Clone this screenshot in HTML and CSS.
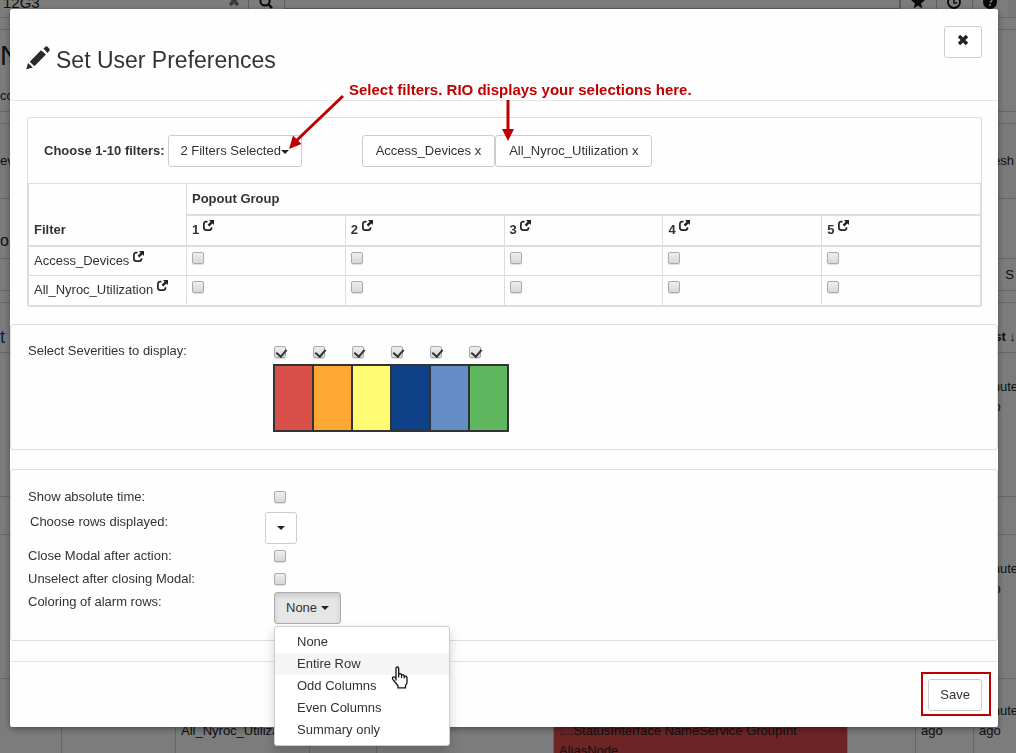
FILE: index.html
```html
<!DOCTYPE html>
<html lang="en">
<head>
<meta charset="utf-8">
<title>Set User Preferences</title>
<link rel="stylesheet" href="styles.css">
</head>
<body>
<svg class="defs" aria-hidden="true">
  <symbol id="i-share" viewBox="0 0 11 11"><path d="M4.500 1.700H3.200Q.9 1.700.9 4V7.800Q.9 10.100 3.200 10.100H6.200Q8.500 10.100 8.500 7.800V7.200" fill="none" stroke="#222" stroke-width="1.700"/><path d="M6 0h5v5L9.400 3.600 6.400 6.600 4.600 4.800 7.600 1.700z" fill="#222"/></symbol>
  <symbol id="i-x" viewBox="0 0 12 12"><path d="M3.200.8 6 3.600 8.800.8 11.200 3.200 8.400 6 11.200 8.800 8.800 11.200 6 8.400 3.200 11.200.8 8.800 3.600 6 .8 3.200z" fill="currentColor"/></symbol>
</svg>

<main class="page" aria-hidden="true">
  <div class="topbar">
    <span class="tb-query">12G3</span>
    <svg class="tb-clear" width="12" height="12"><use href="#i-x"/></svg>
    <span class="tb-cell"><svg width="14" height="14" viewBox="0 0 14 14"><circle cx="6" cy="6" r="4.600" fill="none" stroke="#111" stroke-width="2"/><path d="M9 9l4 4" stroke="#111" stroke-width="2.400"/></svg></span>
    <span class="tb-fill"></span>
    <span class="tb-cell"><svg width="14" height="14" viewBox="0 0 14 14"><path d="M7 0l2 5h5l-4 3.400 1.500 5.100L7 10.500l-4.500 3L4 8.400 0 5h5z" fill="#111"/></svg></span>
    <span class="tb-cell"><svg width="14" height="14" viewBox="0 0 14 14"><circle cx="7" cy="7" r="6" fill="none" stroke="#111" stroke-width="1.800"/><path d="M7 3v5h3" fill="none" stroke="#111" stroke-width="1.400"/></svg></span>
    <span class="tb-cell"><svg width="14" height="14" viewBox="0 0 14 14"><circle cx="7" cy="7" r="7" fill="#111"/><path d="M5 5q0-2 2-2t2 2q0 1-2 2.500M7 9v2" fill="none" stroke="#fff" stroke-width="1.600"/></svg></span>
  </div>
  <div class="band band-gap"></div>
  <div class="band band-title"><span class="big">N</span><span class="small">cc</span></div>
  <div class="band band-gap"></div>
  <div class="band band-tools"><span>ev</span><span class="right">Refresh</span></div>
  <div class="band band-info"><span class="mid">o</span></div>
  <div class="band band-search"><span></span><span class="right">S</span></div>
  <div class="band band-gap"></div>
  <div class="row row-head"><span class="sort">t</span><span></span><span></span><span></span><span></span><span></span><span></span><span></span><span class="blue">Last ↓</span></div>
  <div class="row row-tall"><span></span><span></span><span></span><span></span><span></span><span></span><span></span><span></span><span>minutes ago</span></div>
  <div class="row row-slim"><span></span><span></span><span></span><span></span><span></span><span></span><span></span><span></span><span></span></div>
  <div class="row row-tall"><span></span><span></span><span></span><span></span><span></span><span></span><span></span><span></span><span>minutes ago</span></div>
  <div class="row row-last"><span></span><span></span><span><br>All_Nyroc_Utilization</span><span></span><span></span><span class="alarm"><br>....StatusInterface NameService GroupInt AliasNode</span><span></span><span>minutes ago</span><span>minutes ago</span></div>
</main>

<div class="backdrop">
  <section class="modal" role="dialog" aria-labelledby="title">
    <header class="modal-head">
      <svg class="pencil" width="24" height="24" viewBox="0 0 24 24"><path d="M.3 23.300 2 17 6.900 21.500zM3.700 15.800 15 4.200 19.900 8.600 8.400 20.200zM17.400 2.400 19.800.4Q20.600-.1 21.300.6L23.500 2.900Q24.100 3.700 23.500 4.400L21.600 6.900z" fill="#2b2b2b"/></svg>
      <h1 id="title">Set User Preferences</h1>
      <button class="btn close" aria-label="Close"><svg width="12" height="12"><use href="#i-x"/></svg></button>
    </header>

    <div class="panel filters">
      <div class="choose">
        <strong>Choose 1-10 filters:</strong>
        <button class="btn chosen">2 Filters Selected<i class="caret"></i></button>
        <div class="tags"><button class="btn">Access_Devices x</button><button class="btn">All_Nyroc_Utilization x</button></div>
      </div>
      <table class="groups">
        <thead>
          <tr><th class="name" rowspan="2">Filter</th><th class="double" colspan="5">Popout Group</th></tr>
          <tr><th>1 <svg class="share"><use href="#i-share"/></svg></th><th>2 <svg class="share"><use href="#i-share"/></svg></th><th>3 <svg class="share"><use href="#i-share"/></svg></th><th>4 <svg class="share"><use href="#i-share"/></svg></th><th>5 <svg class="share"><use href="#i-share"/></svg></th></tr>
        </thead>
        <tbody>
          <tr><td>Access_Devices <svg class="share"><use href="#i-share"/></svg></td><td><input type="checkbox" aria-label="Access_Devices group 1"></td><td><input type="checkbox" aria-label="Access_Devices group 2"></td><td><input type="checkbox" aria-label="Access_Devices group 3"></td><td><input type="checkbox" aria-label="Access_Devices group 4"></td><td><input type="checkbox" aria-label="Access_Devices group 5"></td></tr>
          <tr><td>All_Nyroc_Utilization <svg class="share"><use href="#i-share"/></svg></td><td><input type="checkbox" aria-label="All_Nyroc_Utilization group 1"></td><td><input type="checkbox" aria-label="All_Nyroc_Utilization group 2"></td><td><input type="checkbox" aria-label="All_Nyroc_Utilization group 3"></td><td><input type="checkbox" aria-label="All_Nyroc_Utilization group 4"></td><td><input type="checkbox" aria-label="All_Nyroc_Utilization group 5"></td></tr>
        </tbody>
      </table>
    </div>

    <div class="panel severities">
      <span class="label">Select Severities to display:</span>
      <div>
        <div class="checks"><input type="checkbox" checked aria-label="Critical"><input type="checkbox" checked aria-label="Major"><input type="checkbox" checked aria-label="Minor"><input type="checkbox" checked aria-label="Warning"><input type="checkbox" checked aria-label="Info"><input type="checkbox" checked aria-label="Clear"></div>
        <div class="swatches"><i class="red"></i><i class="orange"></i><i class="yellow"></i><i class="navy"></i><i class="sky"></i><i class="green"></i></div>
      </div>
    </div>

    <div class="panel settings">
      <div class="setting"><label class="label" for="abs">Show absolute time:</label><input type="checkbox" id="abs"></div>
      <div class="setting rows"><label class="label" for="rows">Choose rows displayed:</label><button class="btn square" id="rows"><i class="caret"></i></button></div>
      <div class="setting"><label class="label" for="cls">Close Modal after action:</label><input type="checkbox" id="cls"></div>
      <div class="setting"><label class="label" for="uns">Unselect after closing Modal:</label><input type="checkbox" id="uns"></div>
      <div class="setting coloring"><label class="label" for="col">Coloring of alarm rows:</label>
        <div class="dropdown">
          <button class="btn open" id="col">None <i class="caret"></i></button>
          <div class="menu">
            <a href="#none">None</a><a href="#entire" class="active">Entire Row</a><a href="#odd">Odd Columns</a><a href="#even">Even Columns</a><a href="#summary">Summary only</a>
            <svg class="pointer" width="18" height="23" viewBox="0 0 18 23"><path d="M5 14.500V2.500Q5 1 6.300 1T7.700 2.500V8Q10.400 7.200 10.600 8.900 13 8.400 13.300 10.100 16 9.700 16 12V16Q16 18 14.500 19.500V21.800H7V19.800L2.300 14Q.7 11.900 2 11.100T5 12.500" fill="#fff" stroke="#111" stroke-width="1.300"/><path d="M7.700 7.500V11.500M10.600 8.900V12M13.300 10V12.500" stroke="#111" stroke-width="1.200"/></svg>
          </div>
        </div>
      </div>
    </div>

    <footer class="modal-foot"><div class="highlight"><button class="btn">Save</button></div></footer>

    <p class="note">Select filters. RIO displays your selections here.</p>
    <svg class="arrows" width="240" height="60" viewBox="0 0 240 60"><path d="M62 3 15 48M227 7V39" stroke="#c00000" stroke-width="3" fill="none"/><path d="M8 56 12 42.500 20.500 51zM221 36h12l-6 12z" fill="#c00000"/></svg>
  </section>
</div>
</body>
</html>
```
FILE: styles.css
```css
* { box-sizing: border-box; }
html, body { height: 100%; }
body {
  margin: 0;
  overflow: hidden;
  background: #fff;
  color: #333;
  font: 13px/20px "Liberation Sans", Arial, sans-serif;
}
.defs { display: none; }
svg { flex: none; }

/* Page underneath the dialog */
.page { overflow: hidden; height: 100%; background: #f9f9f9; color: #222; }
.topbar { display: flex; height: 18px; border-bottom: 1px solid #ccc; line-height: 6px; }
.topbar svg { margin-top: -5px; }
.tb-query { width: 228px; padding-left: 3px; font-size: 15px; }
.tb-clear { color: #777; }
.topbar .tb-clear { margin-right: 8px; }
.tb-cell { width: 36px; padding-left: 10px; border-left: 1px solid #bbb; }
.tb-fill { flex: 1; height: 9px; border: 1px solid #bbb; border-top: 0; }
.tb-cell:last-child { width: 44px; border-right: 8px solid #eee; }
.band { display: flex; justify-content: space-between; border-bottom: 1px solid #ccc; }
.band-gap { height: 12px; }
.band-title { display: block; height: 82px; line-height: 28px; padding-top: 12px; }
.band-title span { display: block; }
.big { font-size: 28px; }
.small { margin-top: 12px; }
.band-tools { height: 75px; padding-top: 27px; background: #f4f4f4; }
.band-info { height: 60px; padding-top: 32px; }
.mid { font-size: 16px; }
.band-search { height: 32px; padding-top: 6px; }
.right { padding-right: 2px; }
.row {
  display: grid;
  grid-template-columns: 62px 114px 134px 67px 177px 294px 68px 58px 1fr;
  border-bottom: 1px solid #ccc;
}
.row > span { padding: 24px 5px 0; border-right: 1px solid #ccc; min-width: 0; }
.row > span:last-child { padding-right: 0; border-right: 0; }
.row-head { height: 50px; font-weight: bold; }
.row.row-head .sort { padding-left: 0; color: #048; font-size: 18px; font-weight: normal; }
.row-head .blue { white-space: nowrap; }
.row-tall { height: 144px; }
.row-slim { height: 38px; }
.row-last { height: 120px; }
.row.row-last > span { padding-top: 22px; }
.row > span.alarm { background: #d9484a; }

/* Dialog */
.backdrop {
  position: fixed;
  inset: 0;
  padding: 9px 18px 0 10px;
  background: rgba(0, 0, 0, .5);
}
.modal {
  position: relative;
  background: #fefefe;
  border-radius: 2px;
  box-shadow: 0 2px 6px rgba(0, 0, 0, .4);
}
.modal-head {
  display: flex;
  align-items: flex-start;
  min-height: 92px;
  padding: 17px 16px;
  border-bottom: 1px solid #e5e5e5;
}
.pencil { margin: 20px 6px 0 0; }
h1 { flex: 1; margin: 20px 0 0; font-size: 23px; line-height: 28px; font-weight: normal; }
.btn {
  height: 32px;
  padding: 0 11px;
  border: 1px solid #ccc;
  border-radius: 3px;
  background: #fff;
  color: #333;
  font: inherit;
  white-space: nowrap;
}
.close { width: 38px; padding: 0; color: #222; }
.caret {
  display: inline-block;
  border: 4px solid transparent;
  border-top-color: #222;
  border-bottom: 0;
  vertical-align: middle;
}
.panel { border: 1px solid #ddd; border-radius: 3px; }
.filters { margin: 16px 16px 17px 17px; border-bottom: 0; }
.choose { display: flex; align-items: center; gap: 3px; padding: 17px 16px 16px; }
.chosen { min-width: 134px; }
.tags { display: flex; margin-left: 57px; }
.tags .btn { padding: 0 13px; }
.groups { width: 100%; table-layout: fixed; border-collapse: collapse; border-bottom: 1px solid #ddd; }
.groups th, .groups td {
  height: 31px;
  padding: 0 5px;
  border: 1px solid #ddd;
  text-align: left;
  line-height: 20px;
  white-space: nowrap;
}
.groups td { height: 30px; }
.groups .name { width: 158px; padding-bottom: 5px; vertical-align: bottom; }
.groups .double { border-bottom-width: 2px; }
.groups thead { border-bottom: 2px solid #ddd; }
.groups tr:last-child td { border-bottom-width: 2px; }
.share { width: 11px; height: 11px; vertical-align: 3px; }
input[type="checkbox"] {
  appearance: none;
  display: block;
  width: 12px;
  height: 12px;
  margin: 0;
  border: 1px solid #aaa;
  border-radius: 2px;
  background: linear-gradient(#eee, #d8d8d8);
  box-shadow: 0 1px 1px #ddd;
}
td input[type="checkbox"] { margin-bottom: 6px; }
input[type="checkbox"]:checked::after {
  content: "";
  display: block;
  width: 5px;
  height: 8px;
  margin: 0 0 0 3px;
  border: solid #333;
  border-width: 0 2px 2px 0;
  transform: rotate(40deg);
}
.label { width: 246px; }
.severities { display: flex; min-height: 126px; padding: 16px 17px; }
.severities .label { width: 245px; }
.checks { display: flex; gap: 27px; margin: 5px 0 6px 1px; }
.swatches { display: flex; gap: 2px; padding: 2px; background: #333; }
.swatches i { width: 37px; height: 64px; }
.red { background: #d9504b; }
.orange { background: #fca833; }
.yellow { background: #fffb72; }
.navy { background: #0e4188; }
.sky { background: #648dc5; }
.green { background: #5eb75f; }
.settings { margin-top: 19px; padding: 16px 17px 15px; }
.setting { display: flex; align-items: center; height: 23px; }
.setting.rows { align-items: flex-start; height: 36px; padding: 3px 0 0 2px; }
.rows .label { width: 235px; }
.square { width: 32px; padding: 0; }
.setting.coloring { align-items: flex-start; height: 34px; }
.coloring .label { padding-top: 1px; }
.dropdown { position: relative; padding-top: 1px; }
.btn.open { background: #e6e6e6; border-color: #adadad; box-shadow: inset 0 3px 5px rgba(0, 0, 0, .13); }
.menu {
  position: absolute;
  top: 35px;
  left: 0;
  z-index: 2;
  display: flex;
  flex-direction: column;
  width: 176px;
  padding: 4px 0;
  border: 1px solid #ccc;
  border-radius: 3px;
  background: #fff;
  box-shadow: 0 6px 12px rgba(0, 0, 0, .18);
}
.menu a { padding: 0 22px; color: #333; line-height: 22px; text-decoration: none; }
.menu a.active { background: #f5f5f5; }
.pointer { position: absolute; left: 116px; top: 39px; }
.modal-foot {
  display: flex;
  justify-content: flex-end;
  margin-top: 20px;
  padding: 10px 7px 11px;
  border-top: 1px solid #e5e5e5;
}
.highlight { padding: 5px 7px 3px 5px; border: 2px solid #c00000; }

/* Callouts over the dialog */
.note {
  position: absolute;
  left: 339px;
  top: 71px;
  margin: 0;
  color: #c00000;
  font-size: 15px;
  font-weight: bold;
  white-space: nowrap;
}
.arrows { position: absolute; left: 271px; top: 84px; }
```
